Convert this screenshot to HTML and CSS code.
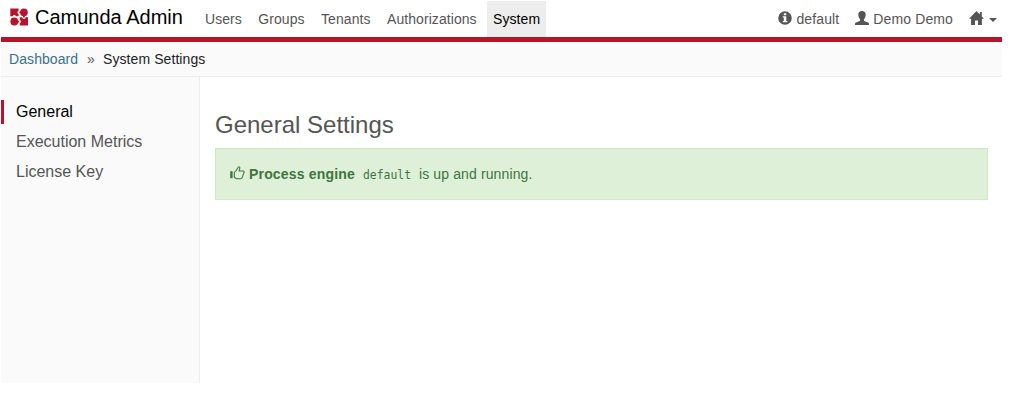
FILE: index.html
```html
<!DOCTYPE html>
<html lang="en">
<head>
<meta charset="utf-8">
<title>Camunda Admin</title>
<link rel="stylesheet" href="styles.css">
</head>
<body>
<div class="app">
  <header class="header">
    <a class="brand">
      <svg class="logo" width="19" height="18" viewBox="0 0 19 18">
        <path d="M0.300 0.500H8.600V2.800A1.700 1.700 0 0 0 8.600 6V8.300H6A1.700 1.700 0 0 0 2.700 8.300H0.300Z"/>
        <circle cx="13.900" cy="4.300" r="3.900"/>
        <rect x="9.400" y="3.500" width="2" height="1.700"/>
        <rect x="13" y="7" width="1.800" height="2.500"/>
        <circle cx="4.300" cy="13.500" r="3.900"/>
        <rect x="7" y="12.700" width="2" height="1.700"/>
        <path d="M9.700 9.300H12.200A1.700 1.700 0 0 0 15.600 9.300H18V17.500H9.700V15.200A1.700 1.700 0 0 0 9.700 11.900Z"/>
      </svg>
      <span>Camunda Admin</span>
    </a>
    <nav class="nav">
      <a class="nav-item">Users</a>
      <a class="nav-item">Groups</a>
      <a class="nav-item">Tenants</a>
      <a class="nav-item">Authorizations</a>
      <a class="nav-item active">System</a>
    </nav>
    <div class="account">
      <a class="account-item">
        <svg class="icon" width="14" height="14" viewBox="0 0 14 14"><path fill-rule="evenodd" d="M7 .2a6.8 6.8 0 1 0 0 13.6A6.8 6.8 0 0 0 7 .2ZM5.8 2.3h2.500v2H5.800ZM4.800 5.300h3.500v4.600h1v1.400H4.800V9.900h1V6.600h-1Z"/></svg>
        <span>default</span>
      </a>
      <a class="account-item">
        <svg class="icon" width="14" height="14" viewBox="0 0 14 14"><path d="M7 .1C4.600.1 3.300 1.500 3.300 3.700c0 1.900.8 3.500 1.800 4.500v.9c0 .5-.3.8-.9 1.100L1 11.500c-.7.300-1 .8-1 1.400V14h14v-1.100c0-.6-.3-1.100-1-1.400L9.800 10.200c-.6-.3-.9-.6-.9-1.100v-.9c1-1 1.800-2.600 1.800-4.500C10.700 1.500 9.400.1 7 .1Z"/></svg>
        <span>Demo Demo</span>
      </a>
      <a class="account-item home">
        <svg class="icon" width="15" height="14" viewBox="0 0 15 14"><path d="M7.500 0 0 7.800h2.100V14h3.900V9.500h3V14h3.900V7.800H15l-2.200-2.400V1h-2v2.400Z"/></svg>
        <span class="caret"></span>
      </a>
    </div>
  </header>
  <div class="breadcrumbs">
    <a class="crumb-link">Dashboard</a>
    <span class="divider">»</span>
    <span class="crumb-current">System Settings</span>
  </div>
  <div class="body">
    <aside class="sidebar">
      <a class="side-item selected">General</a>
      <a class="side-item">Execution Metrics</a>
      <a class="side-item">License Key</a>
    </aside>
    <main class="content">
      <h1 class="title">General Settings</h1>
      <div class="alert">
        <svg class="thumb" width="15" height="14" viewBox="0 0 15 14"><path class="cuff" d="M.2 5.200h2.400v7H.2Z"/><path class="hand" d="M4.300 6.200C6 5.700 6.900 3.700 7.600 2.300 8 1.200 8.300.7 8.900.7c.9 0 1.100.8.9 1.700L9.200 5h3.900c1.200 0 1.400 1.200.7 1.800L12.300 11.400c-.3.900-.7 1.400-1.600 1.400H6.500L4.300 11.300Z"/></svg>
        <strong class="engine">Process engine</strong>
        <code class="code">default</code>
        <span class="status">is up and running.</span>
      </div>
    </main>
  </div>
</div>
</body>
</html>
```
FILE: styles.css
```css
* { box-sizing: border-box; }
body {
  margin: 0;
  background: #fff;
  color: #555;
  font: 14px/20px "Liberation Sans", Arial, sans-serif;
}
.app {
  width: 1001px;
  height: 382px;
  margin: 1px 0 0 1px;
  display: flex;
  flex-direction: column;
}
.header {
  height: 41px;
  display: flex;
  border-bottom: 5px solid #b5152b;
}
.brand {
  display: flex;
  width: 198px;
  padding: 5px 0 0 9px;
  gap: 6px;
  color: #000;
  font-size: 20px;
  line-height: 22px;
}
.logo { margin-top: 2px; fill: #b5152b; }
.nav { display: flex; gap: 4.4px; letter-spacing: .07px; }
.nav-item { padding: 8px 6px; }
.nav-item.active { background: #ededed; color: #000; }
.account {
  display: flex;
  gap: 16px;
  margin-left: auto;
  padding: 8px 5px 0 0;
  letter-spacing: .12px;
}
.account-item { display: flex; gap: 4px; }
.icon { margin-top: 2px; fill: #555; }
.home { gap: 5px; }
.caret {
  width: 8px;
  height: 4px;
  margin-top: 9px;
  border: 4px solid transparent;
  border-top-color: #555;
  border-bottom: 0;
}
.breadcrumbs {
  height: 35px;
  display: flex;
  padding: 7px 8px;
  background: #fafafa;
  border-bottom: 1px solid #ededed;
  letter-spacing: .08px;
}
.crumb-link { color: #3b7088; width: 70px; }
.divider { padding: 0 8px; width: 24px; }
.crumb-current { color: #222; }
.body { display: flex; flex: 1; }
.sidebar {
  width: 199px;
  padding-top: 23px;
  display: flex;
  flex-direction: column;
  gap: 6px;
  background: #fafafa;
  border-right: 1px solid #ededed;
}
.side-item {
  padding-left: 12px;
  border-left: 3px solid transparent;
  font-size: 16px;
  line-height: 24px;
}
.side-item.selected { color: #000; border-left-color: #b5152b; }
.content { flex: 1; padding: 35px 14px 0 15px; }
.title {
  margin: 0 0 10px;
  font-size: 24px;
  font-weight: normal;
  line-height: 26px;
}
.alert {
  height: 52px;
  display: flex;
  padding: 15px 14px;
  background: #dff0d8;
  border: 1px solid #d0e9c2;
  color: #3c763d;
}
.thumb { margin: 2px 4px 0 0; }
.cuff { fill: #3c763d; }
.hand { fill: none; stroke: #3c763d; stroke-width: 1.1; stroke-linejoin: round; }
.engine { width: 106px; letter-spacing: .17px; }
.code {
  width: 64px;
  padding-left: 8px;
  font: 11.4px/22px "DejaVu Sans Mono", monospace;
}
.status { letter-spacing: .12px; }
```
